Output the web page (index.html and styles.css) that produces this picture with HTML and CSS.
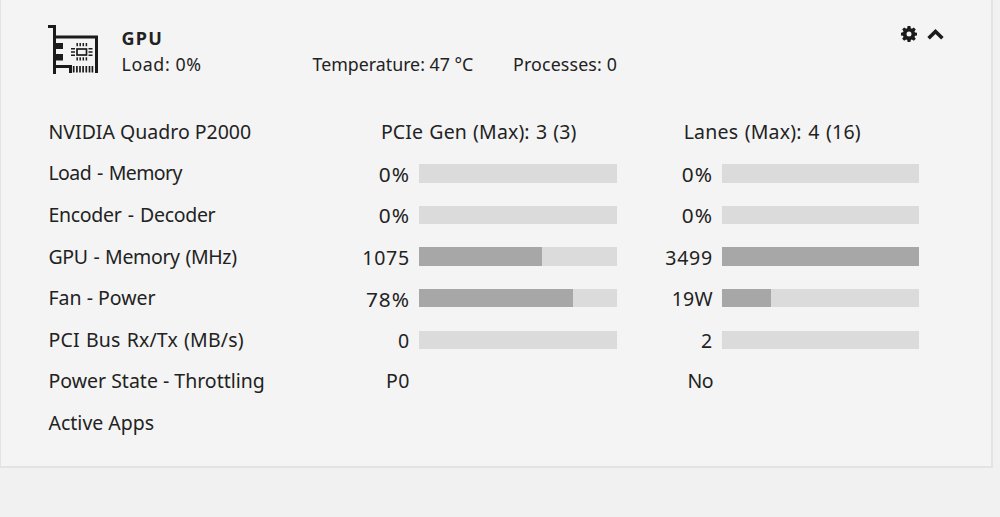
FILE: index.html
```
<!DOCTYPE html>
<html lang="en">
<head>
    <meta charset="UTF-8">
    <meta name="viewport" content="width=device-width, initial-scale=1.0">
    <title>GPU Statistics</title>
    <link rel="stylesheet" href="styles.css">
</head>
<body>
    <div class="tile">
        <header class="tile-header">
            <svg class="gpu-icon" viewBox="0 0 50 50">
                <path d="M0 0h8v10.500h42v37.500h-3V13.500H8v4.500h7v6H8v5h7v6.500H8v4.500h16v8h-3v-5H8v6H5V3H0z"/>
                <path d="M25.700 41v6.500M28.900 41v6.500M32 41v6.500M35.100 41v6.500M38.300 41v6.500M41.500 41v6.500M44.400 41v6.500" class="pins"/>
                <rect x="29" y="24" width="9.500" height="6" class="chip"/>
                <path d="M29.200 18v3.200M32.200 18v3.200M35.300 18v3.200M38.400 18v3.200M29.200 32.200v3.200M32.200 32.200v3.200M35.300 32.200v3.200M38.400 32.200v3.200M23 23.800h4M23 27h4M23 30.200h4M40.500 23.800h4M40.500 27h4M40.500 30.200h4" class="legs"/>
            </svg>
            <div class="title">
                <h1>GPU</h1>
                <div class="summary">
                    <span class="load">Load: 0%</span>
                    <span class="temp">Temperature: 47 °C</span>
                    <span class="procs">Processes: 0</span>
                </div>
            </div>
            <div class="controls">
                <svg class="gear" viewBox="0 0 16 16">
                    <path fill-rule="evenodd" d="M6.600 0h2.800l.4 2.200 1.100.5 1.900-1.300 2 2-1.300 1.900.5 1.100 2.100.3v2.700l-2.100.4-.5 1.100 1.300 1.900-2 2-1.900-1.300-1.100.5-.4 2.100H6.600l-.4-2.100-1.100-.5-1.900 1.300-2-2 1.300-1.900-.5-1.100L0 9.400V6.700l2-.4.500-1.100-1.300-1.900 2-1.900 1.900 1.300 1.100-.5zM8 5.500a2.500 2.500 0 1 0 0 5 2.500 2.500 0 0 0 0-5z"/>
                </svg>
                <svg class="chevron" viewBox="0 0 17 11">
                    <path d="M1.600 9.300L8.500 2.500l6.900 6.800"/>
                </svg>
            </div>
        </header>

        <div class="stats">
            <div class="row">
                <span class="label name">NVIDIA Quadro P2000</span>
                <span class="info pcie">PCIe Gen (Max): 3 (3)</span>
                <span class="info lanes">Lanes (Max): 4 (16)</span>
            </div>
            <div class="row">
                <span class="label memory">Load - Memory</span>
                <div class="meter"><span class="value percent">0%</span><div class="bar"></div></div>
                <div class="meter"><span class="value percent">0%</span><div class="bar"></div></div>
            </div>
            <div class="row">
                <span class="label encoder">Encoder - Decoder</span>
                <div class="meter"><span class="value percent">0%</span><div class="bar"></div></div>
                <div class="meter"><span class="value percent">0%</span><div class="bar"></div></div>
            </div>
            <div class="row">
                <span class="label clock">GPU - Memory (MHz)</span>
                <div class="meter"><span class="value">1075</span><div class="bar"><div class="fill" style="width: 62%"></div></div></div>
                <div class="meter"><span class="value">3499</span><div class="bar"><div class="fill" style="width: 100%"></div></div></div>
            </div>
            <div class="row">
                <span class="label fan">Fan - Power</span>
                <div class="meter"><span class="value percent">78%</span><div class="bar"><div class="fill" style="width: 77.7%"></div></div></div>
                <div class="meter"><span class="value watts">19W</span><div class="bar"><div class="fill" style="width: 25%"></div></div></div>
            </div>
            <div class="row">
                <span class="label bus">PCI Bus Rx/Tx (MB/s)</span>
                <div class="meter"><span class="value">0</span><div class="bar"></div></div>
                <div class="meter"><span class="value">2</span><div class="bar"></div></div>
            </div>
            <div class="row">
                <span class="label state">Power State - Throttling</span>
                <div class="meter"><span class="value plain">P0</span></div>
                <div class="meter"><span class="value plain no">No</span></div>
            </div>
            <div class="row">
                <span class="label apps">Active Apps</span>
            </div>
        </div>
    </div>
</body>
</html>
```
FILE: styles.css
```
body {
    margin: 0;
    background-color: #f1f1f1;
    color: #222;
    font-family: "Noto Sans", sans-serif;
}

.tile {
    box-sizing: border-box;
    width: 992.500px;
    height: 467.500px;
    padding: 25px 47px 0 47.500px;
    background-color: #f4f4f4;
    border: 2px solid #e3e3e3;
    border-left-width: 1px;
    border-top: none;
}

.tile-header {
    display: flex;
    height: 85.500px;
}

.gpu-icon {
    width: 50px;
    height: 50px;
    margin: 0 23.500px 0 -0.500px;
}

.gpu-icon path,
.gear path {
    fill: #1c1b1b;
}

.gpu-icon .pins,
.gpu-icon .legs,
.gpu-icon .chip {
    fill: none;
    stroke: #1c1b1b;
    stroke-width: 1.7;
}

.gpu-icon .legs {
    stroke-width: 1.5;
}

.title {
    flex: 1;
}

h1 {
    margin: 0;
    font-size: 18px;
    line-height: 27px;
    letter-spacing: 1.300px;
}

.summary {
    display: grid;
    grid-template-columns: 191px 200.500px auto;
    font-size: 17.800px;
    line-height: 25px;
    white-space: nowrap;
}

.load {
    letter-spacing: 0.600px;
}

.procs {
    letter-spacing: 0.150px;
}

.controls {
    display: flex;
    align-items: flex-start;
    gap: 10px;
}

.gear {
    width: 16px;
    height: 16px;
    margin-top: 1px;
}

.chevron {
    width: 17px;
    height: 11px;
    margin-top: 4px;
}

.chevron path {
    fill: none;
    stroke: #1c1b1b;
    stroke-width: 3.6;
}

.row {
    display: grid;
    grid-template-columns: 292px 276.500px 301.500px;
    align-items: center;
    height: 41.600px;
    font-size: 19.500px;
    white-space: nowrap;
}

.label {
    justify-self: start;
}

.memory {
    letter-spacing: -0.600px;
    word-spacing: 1.500px;
}

.encoder {
    letter-spacing: -0.300px;
    word-spacing: 1.500px;
}

.clock {
    letter-spacing: -0.350px;
    word-spacing: 1px;
}

.bus {
    letter-spacing: 0.150px;
    word-spacing: 1px;
}

.info {
    justify-self: center;
}

.pcie {
    letter-spacing: 0.120px;
    word-spacing: 1px;
}

.lanes {
    margin-left: 9px;
    letter-spacing: 0.200px;
    word-spacing: 1.200px;
}

.meter {
    display: flex;
    align-items: center;
}

.value {
    box-sizing: border-box;
    width: 69.500px;
    margin: 2px -1px 0 0;
    letter-spacing: 0.800px;
    text-align: right;
}

.meter:last-child .value {
    width: 96px;
}

.percent {
    font-size: 20.800px;
    letter-spacing: 1px;
}

.watts {
    letter-spacing: 0.300px;
}

.plain {
    margin-top: 0;
    letter-spacing: 0.500px;
}

.no {
    letter-spacing: -0.500px;
}

.bar {
    flex: 1;
    height: 18.500px;
    margin: 1px 0 0 9.500px;
    background-color: #dbdbdb;
}

.fill {
    height: 100%;
    background-color: #a7a7a7;
}
```
